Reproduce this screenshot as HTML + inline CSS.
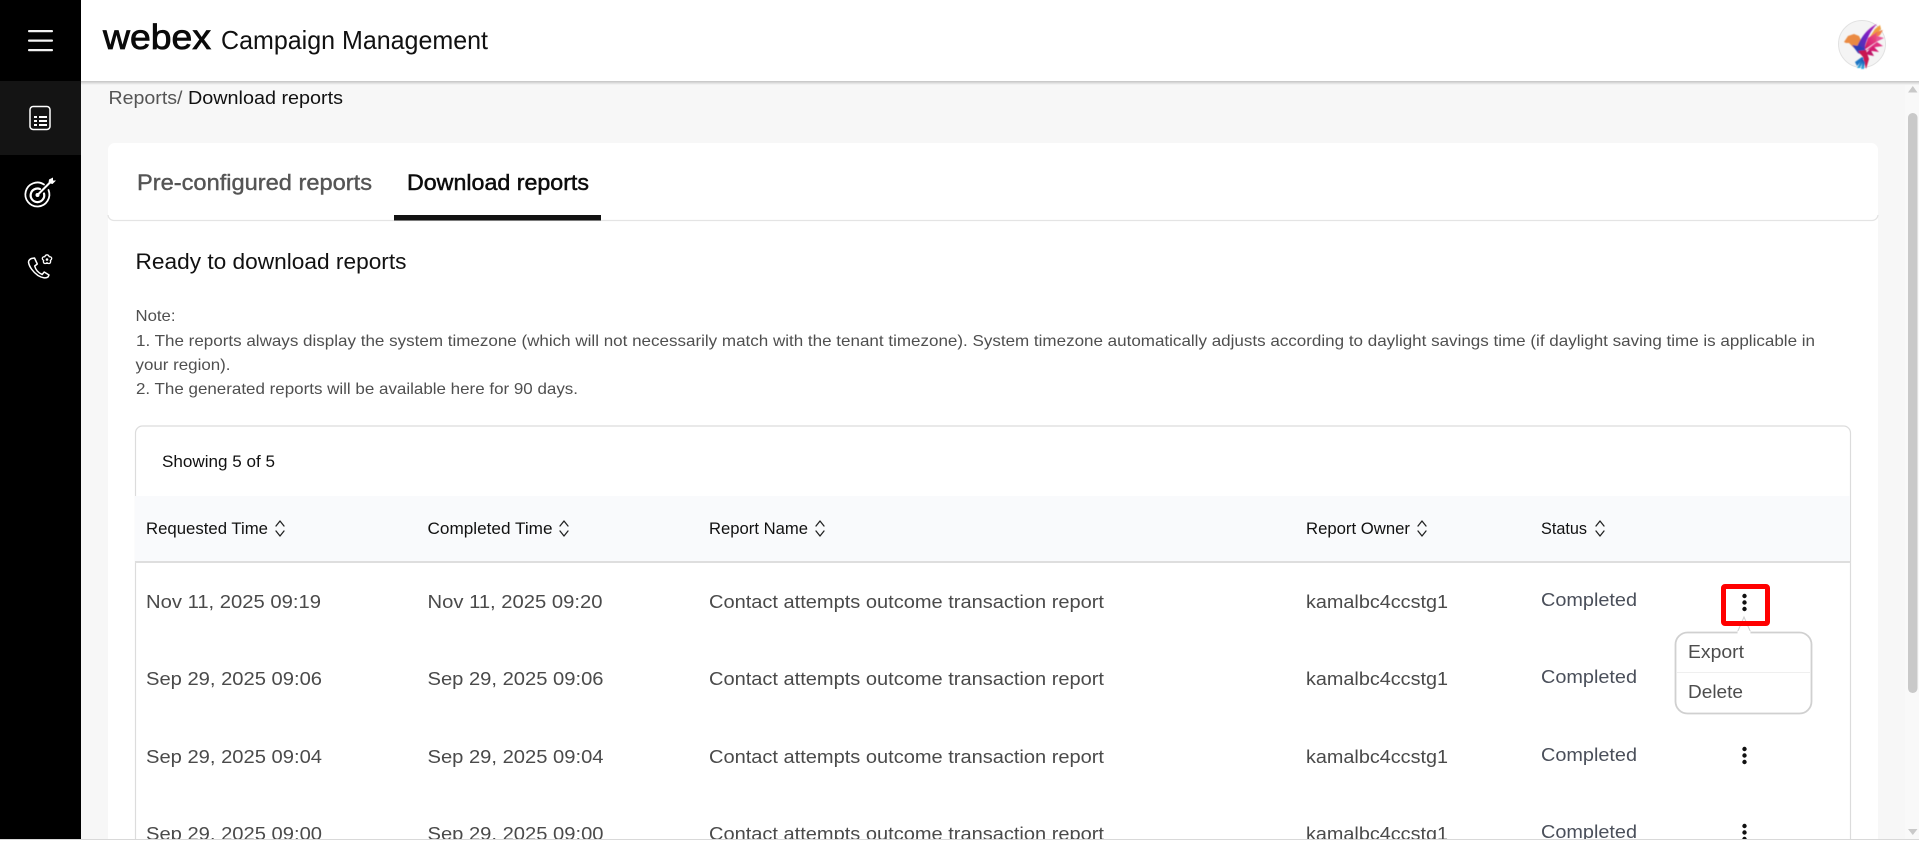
<!DOCTYPE html>
<html lang="en">
<head>
<meta charset="utf-8">
<title>Webex Campaign Management</title>
<style>
html,body{margin:0;padding:0;width:1919px;height:843px;overflow:hidden;background:#fff}
svg{display:block;position:absolute;left:0;top:0}
text{font-family:"Liberation Sans",sans-serif;white-space:pre}
.r{font-size:18px;fill:#4a4a4a}
.h{font-size:16.5px;fill:#111}
.n{font-size:16px;fill:#4f4f4f}
.s{font-size:18px;fill:#4a4f5a}
</style>
</head>
<body>
<svg width="1919" height="843" viewBox="0 0 1919 843" xmlns="http://www.w3.org/2000/svg">
<defs>
<linearGradient id="sh" x1="0" y1="0" x2="0" y2="1"><stop offset="0" stop-color="#c4c4c4"/><stop offset="1" stop-color="#f7f7f7"/></linearGradient>
<linearGradient id="wing" x1="0" y1="1" x2="1" y2="0"><stop offset="0" stop-color="#2a3fb0"/><stop offset=".55" stop-color="#7a1fc4"/><stop offset="1" stop-color="#b824b0"/></linearGradient>
<linearGradient id="fan" x1="0" y1="1" x2="1" y2="0"><stop offset="0" stop-color="#c8145c"/><stop offset=".55" stop-color="#e0307e"/><stop offset="1" stop-color="#ee5f70"/></linearGradient>
<linearGradient id="tail" x1="0" y1="0" x2="0" y2="1"><stop offset="0" stop-color="#1a4fb0"/><stop offset="1" stop-color="#35b0e0"/></linearGradient>
<filter id="soft" x="-10%" y="-10%" width="120%" height="120%"><feGaussianBlur stdDeviation="0.4"/></filter>
<clipPath id="viewclip"><rect x="81" y="81" width="1838" height="758"/></clipPath>
</defs>

<!-- page bg -->
<rect x="81" y="81" width="1838" height="758" fill="#f7f7f7"/>
<rect x="1905" y="84" width="14" height="755" fill="#f9f9f9"/>

<!-- card -->
<g clip-path="url(#viewclip)">
<rect x="108" y="143" width="1770" height="720" rx="7" fill="#fff"/>
<path d="M108 215 a6 6 0 0 0 6 5.500 H1872 a6 6 0 0 0 6 -5.500" fill="none" stroke="#e4e4e4" stroke-width="1.300"/>
<rect x="394" y="215" width="207" height="5.500" fill="#121212"/>

<text x="137" y="190" font-size="22.5" fill="#555" stroke="#555" stroke-width=".4" textLength="235" lengthAdjust="spacingAndGlyphs">Pre-configured reports</text>
<text x="407" y="190" font-size="22.5" fill="#0c0c0c" stroke="#0c0c0c" stroke-width=".5" textLength="182" lengthAdjust="spacingAndGlyphs">Download reports</text>

<text x="135.500" y="269" font-size="22" fill="#111" textLength="271" lengthAdjust="spacingAndGlyphs">Ready to download reports</text>

<text class="n" x="135.500" y="321" textLength="40" lengthAdjust="spacingAndGlyphs">Note:</text>
<text class="n" x="136" y="346" textLength="1679" lengthAdjust="spacingAndGlyphs">1. The reports always display the system timezone (which will not necessarily match with the tenant timezone). System timezone automatically adjusts according to daylight savings time (if daylight saving time is applicable in</text>
<text class="n" x="135.500" y="370" textLength="95" lengthAdjust="spacingAndGlyphs">your region).</text>
<text class="n" x="136" y="394" textLength="442" lengthAdjust="spacingAndGlyphs">2. The generated reports will be available here for 90 days.</text>

<!-- table -->
<path d="M135.500 860 V433 a7 7 0 0 1 7 -7 H1843.500 a7 7 0 0 1 7 7 V860" fill="#fff" stroke="#dcdcdc" stroke-width="1.200"/>
<rect x="135" y="496" width="1716" height="65" fill="#f9fafc"/>
<rect x="135" y="561" width="1716" height="2" fill="#dedede"/>
<rect x="1850" y="496" width="1" height="66" fill="#dcdcdc"/>

<text x="162" y="467" font-size="16.500" fill="#111" textLength="113" lengthAdjust="spacingAndGlyphs">Showing 5 of 5</text>

<text class="h" x="146" y="534" textLength="122" lengthAdjust="spacingAndGlyphs">Requested Time</text>
<text class="h" x="427.500" y="534" textLength="125" lengthAdjust="spacingAndGlyphs">Completed Time</text>
<text class="h" x="709" y="534" textLength="99" lengthAdjust="spacingAndGlyphs">Report Name</text>
<text class="h" x="1306" y="534" textLength="104" lengthAdjust="spacingAndGlyphs">Report Owner</text>
<text class="h" x="1541" y="534" textLength="46" lengthAdjust="spacingAndGlyphs">Status</text>

<g fill="none" stroke="#222" stroke-width="1.300" stroke-linecap="round" stroke-linejoin="round">
<path d="M276 526 L280 521 L284 526 M276 531 L280 536 L284 531"/>
<path d="M560 526 L564 521 L568 526 M560 531 L564 536 L568 531"/>
<path d="M816 526 L820 521 L824 526 M816 531 L820 536 L824 531"/>
<path d="M1418 526 L1422 521 L1426 526 M1418 531 L1422 536 L1426 531"/>
<path d="M1596 526 L1600 521 L1604 526 M1596 531 L1600 536 L1604 531"/>
</g>

<!-- row 1 -->
<text class="r" x="146" y="608" textLength="175" lengthAdjust="spacingAndGlyphs">Nov 11, 2025 09:19</text>
<text class="r" x="427.500" y="608" textLength="175" lengthAdjust="spacingAndGlyphs">Nov 11, 2025 09:20</text>
<text class="r" x="709" y="608" textLength="395" lengthAdjust="spacingAndGlyphs">Contact attempts outcome transaction report</text>
<text class="r" x="1306" y="608" textLength="142" lengthAdjust="spacingAndGlyphs">kamalbc4ccstg1</text>
<text class="s" x="1541" y="606" textLength="96" lengthAdjust="spacingAndGlyphs">Completed</text>
<!-- row 2 -->
<text class="r" x="146" y="685" textLength="176" lengthAdjust="spacingAndGlyphs">Sep 29, 2025 09:06</text>
<text class="r" x="427.500" y="685" textLength="176" lengthAdjust="spacingAndGlyphs">Sep 29, 2025 09:06</text>
<text class="r" x="709" y="685" textLength="395" lengthAdjust="spacingAndGlyphs">Contact attempts outcome transaction report</text>
<text class="r" x="1306" y="685" textLength="142" lengthAdjust="spacingAndGlyphs">kamalbc4ccstg1</text>
<text class="s" x="1541" y="683" textLength="96" lengthAdjust="spacingAndGlyphs">Completed</text>
<!-- row 3 -->
<text class="r" x="146" y="763" textLength="176" lengthAdjust="spacingAndGlyphs">Sep 29, 2025 09:04</text>
<text class="r" x="427.500" y="763" textLength="176" lengthAdjust="spacingAndGlyphs">Sep 29, 2025 09:04</text>
<text class="r" x="709" y="763" textLength="395" lengthAdjust="spacingAndGlyphs">Contact attempts outcome transaction report</text>
<text class="r" x="1306" y="763" textLength="142" lengthAdjust="spacingAndGlyphs">kamalbc4ccstg1</text>
<text class="s" x="1541" y="761" textLength="96" lengthAdjust="spacingAndGlyphs">Completed</text>
<!-- row 4 -->
<text class="r" x="146" y="840" textLength="176" lengthAdjust="spacingAndGlyphs">Sep 29, 2025 09:00</text>
<text class="r" x="427.500" y="840" textLength="176" lengthAdjust="spacingAndGlyphs">Sep 29, 2025 09:00</text>
<text class="r" x="709" y="840" textLength="395" lengthAdjust="spacingAndGlyphs">Contact attempts outcome transaction report</text>
<text class="r" x="1306" y="840" textLength="142" lengthAdjust="spacingAndGlyphs">kamalbc4ccstg1</text>
<text class="s" x="1541" y="838" textLength="96" lengthAdjust="spacingAndGlyphs">Completed</text>

<!-- kebab dots -->
<g fill="#111">
<circle cx="1744.500" cy="596" r="2.200"/><circle cx="1744.500" cy="602.500" r="2.200"/><circle cx="1744.500" cy="609" r="2.200"/>
<circle cx="1744.500" cy="749" r="2.200"/><circle cx="1744.500" cy="755.500" r="2.200"/><circle cx="1744.500" cy="762" r="2.200"/>
<circle cx="1744.500" cy="826" r="2.200"/><circle cx="1744.500" cy="832.500" r="2.200"/><circle cx="1744.500" cy="839" r="2.200"/>
</g>

<!-- popover -->
<rect x="1675.500" y="632.500" width="136" height="81" rx="12" fill="#fff" stroke="#d0d0d0" stroke-width="1.800"/>
<path d="M1737 633 L1744 617 L1751 633" fill="#fff" stroke="#cfcfcf" stroke-width="1"/>
<rect x="1737.500" y="631" width="13" height="3" fill="#fff"/>
<rect x="1677" y="672" width="133" height="1" fill="#efefef"/>
<text x="1688" y="658" font-size="18.500" fill="#4d4d4d" textLength="56" lengthAdjust="spacingAndGlyphs">Export</text>
<text x="1688" y="698" font-size="18.500" fill="#4d4d4d" textLength="55" lengthAdjust="spacingAndGlyphs">Delete</text>

<!-- red highlight -->
<rect x="1723.500" y="586.500" width="44" height="37" rx="1.500" fill="none" stroke="#ff0000" stroke-width="5"/>
</g>

<!-- breadcrumb -->
<text x="108.500" y="104" font-size="18.500" fill="#555" textLength="74" lengthAdjust="spacingAndGlyphs">Reports/</text>
<text x="188" y="104" font-size="18.500" fill="#111" textLength="155" lengthAdjust="spacingAndGlyphs">Download reports</text>

<!-- scrollbar -->
<rect x="1908" y="113" width="9.500" height="580" rx="4.700" fill="#c9c9c9"/>
<path d="M1908 92.500 L1912.800 86 L1917.500 92.500Z" fill="#c9c9c9"/>
<path d="M1908 829 L1912.800 835 L1917.500 829Z" fill="#c9c9c9"/>

<!-- header -->
<rect x="81" y="81" width="1838" height="4" fill="url(#sh)"/>
<rect x="81" y="0" width="1838" height="81" fill="#fff"/>
<text x="103" y="49" font-size="35" fill="#0a0a0a" stroke="#0a0a0a" stroke-width=".8" textLength="108" lengthAdjust="spacingAndGlyphs">webex</text>
<text x="221" y="49" font-size="26" fill="#111" textLength="267" lengthAdjust="spacingAndGlyphs">Campaign Management</text>

<!-- avatar -->
<circle cx="1862" cy="44" r="23.500" fill="#f4f4f4" stroke="#e2e2e2" stroke-width="1"/>
<g filter="url(#soft)">
<!-- fan feathers -->
<path d="M1864 46 L1875 29 L1880 25 L1881 29Z" fill="#f0a040"/>
<path d="M1864 47 L1876 32 L1883 30 L1880 35Z" fill="#f08048"/>
<path d="M1864 49 L1877 36 L1884 38 L1878 41Z" fill="#e8549a"/>
<path d="M1865 51 L1877 42 L1883 46 L1876 47Z" fill="#e03080"/>
<path d="M1866 53 L1873 46 L1879 52 L1872 51Z" fill="#d41e70"/>
<path d="M1866 54 L1870 49 L1874 56 L1869 55Z" fill="#c01868"/>
<path d="M1864 50 L1868 38 L1877 32 L1876 42Z" fill="url(#fan)"/>
<!-- head and body -->
<path d="M1844 42 L1848 36 L1854 34 L1859 36 L1863 44 L1860 50 L1854 48 L1849 43 L1846 43Z" fill="#ea8a42"/>
<!-- wing -->
<path d="M1857 47 C1861 37 1868 28 1877 24 C1871 30 1867 38 1865 46 L1865 53 L1860 53Z" fill="url(#wing)"/>
<!-- blue chest -->
<path d="M1852 45 L1860 46 L1866 50 L1865 56 L1858 53Z" fill="#2c3cb6"/>
<!-- red tail -->
<path d="M1858 51 L1866 50 L1869 59 L1866 69 L1863 57Z" fill="#c9144f"/>
<!-- blue tail feathers -->
<path d="M1855 62 L1862 57 L1864 58 L1857 66Z" fill="#1f74c4"/>
<path d="M1857 68 L1862 59 L1864 60 L1860 68Z" fill="url(#tail)"/>
<path d="M1861 69 L1863 60 L1865 62 L1864 69Z" fill="url(#tail)"/>
</g>

<!-- sidebar -->
<rect x="0" y="0" width="81" height="839" fill="#000"/>
<rect x="0" y="81" width="81" height="74" fill="#141414"/>
<g fill="#f2f2f2">
<rect x="28" y="30" width="25" height="2.200" rx="1"/>
<rect x="28" y="39.500" width="25" height="2.200" rx="1"/>
<rect x="28" y="49" width="25" height="2.200" rx="1"/>
</g>
<rect x="30" y="106.500" width="20" height="23" rx="3.200" fill="none" stroke="#fff" stroke-width="1.500"/>
<g fill="#fff">
<rect x="34" y="116" width="3" height="2"/><rect x="39" y="116" width="8" height="2"/>
<rect x="34" y="120" width="3" height="2"/><rect x="39" y="120" width="8" height="2"/>
<rect x="34" y="124" width="3" height="2"/><rect x="39" y="124" width="8" height="2"/>
</g>
<g fill="none" stroke="#fff" stroke-linecap="round" stroke-linejoin="round">
<path d="M44 184.500 A12 12 0 1 0 48.500 190" stroke-width="1.800"/>
<path d="M40 189 A6.800 6.800 0 1 0 44 193.500" stroke-width="2.200"/>
<path d="M37.500 195 L50.500 182" stroke-width="2"/>
</g>
<path d="M48.500 183 L49 179.500 L53 177.500 L53 180.500 L56 180.500 L52.500 184Z" fill="#fff"/>
<circle cx="37.500" cy="195" r="2" fill="#fff"/>
<path d="M31.500 258.500 L34.500 258 L37.300 264 L34.700 266 C35.700 270 38.700 273 42.200 274.500 L44.200 272 L49 275 L48 277 C46 278.500 42 278 38 275.500 C33 272 29 266.500 28.500 262 C28.500 260.500 30 259 31.500 258.500Z" fill="none" stroke="#fff" stroke-width="1.500" stroke-linejoin="round"/>
<path d="M47 254.800 C48.500 254.800 49 256 49.300 256.800 C50.600 256.500 51.800 257.300 51.700 258.600 C51.700 259.500 51 260 50.300 260.500 C50.800 261.500 50.800 262.800 49.500 263.400 C48.500 263.800 47.700 263.300 47 262.700 C46.300 263.300 45.500 263.800 44.500 263.400 C43.200 262.800 43.200 261.500 43.700 260.500 C43 260 42.300 259.500 42.300 258.600 C42.200 257.300 43.400 256.500 44.700 256.800 C45 256 45.500 254.800 47 254.800Z" fill="none" stroke="#fff" stroke-width="1.300" stroke-linejoin="round"/>
<circle cx="47" cy="259.500" r="1.300" fill="#fff"/>

<!-- bottom edge -->
<rect x="0" y="839" width="1919" height="1" fill="#d9d9d9"/>
<rect x="0" y="840" width="1919" height="3" fill="#fff"/>
</svg>
</body>
</html>
